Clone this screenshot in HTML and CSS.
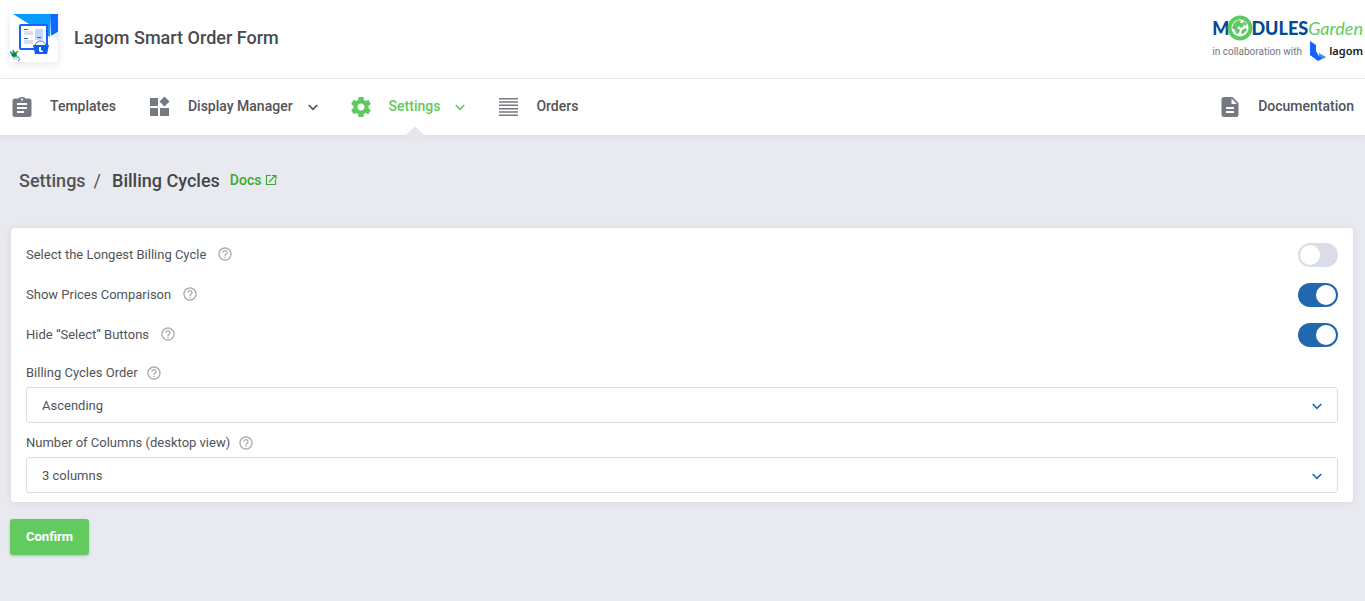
FILE: index.html
```html
<!DOCTYPE html>
<html lang="en">
<head>
    <meta charset="UTF-8">
    <meta name="viewport" content="width=device-width, initial-scale=1.0">
    <title>Lagom Smart Order Form - Billing Cycles</title>
    <link rel="stylesheet" href="styles.css">
</head>
<body>
    <svg class="sprite" aria-hidden="true">
        <symbol id="chevron" viewBox="0 0 12 12">
            <path d="M1.700 4l4.300 4.300L10.300 4" fill="none" stroke="currentColor" stroke-width="1.700"/>
        </symbol>
        <symbol id="help" viewBox="0 0 24 24">
            <path fill="currentColor" d="M11 18h2v-2h-2v2zm1-16C6.480 2 2 6.480 2 12s4.480 10 10 10 10-4.480 10-10S17.520 2 12 2zm0 18c-4.410 0-8-3.590-8-8s3.590-8 8-8 8 3.590 8 8-3.590 8-8 8zm0-14c-2.210 0-4 1.790-4 4h2c0-1.100.9-2 2-2s2 .9 2 2c0 2-3 1.750-3 5h2c0-2.250 3-2.500 3-5 0-2.210-1.790-4-4-4z"/>
        </symbol>
    </svg>

    <header class="header">
        <div class="brand">
            <svg class="brand-logo" viewBox="0 0 48 48" aria-hidden="true">
                <rect width="48" height="48" fill="#fff"/>
                <path d="M3 0h37v23z" fill="#0a9bff"/>
                <path d="M40 0h8v18l-7 4z" fill="#0b6cff"/>
                <path d="M48 18l-7 4 7 5z" fill="#eef0f3"/>
                <rect x="10" y="11" width="27" height="24" rx="1" fill="#fff" stroke="#1463ff" stroke-width="2"/>
                <path d="M14 15.500h4M14 24.500h4" stroke="#1463ff"/>
                <path d="M14 17h9v4h-9zM14 26h9v4h-9z" fill="#dcdee4"/>
                <rect x="25" y="15" width="8" height="11" fill="#c3d8ff"/>
                <path d="M27 23.500h4" stroke="#1463ff"/>
                <path d="M25 33c0-8 11-8 11 0" fill="#fff" stroke="#1463ff"/>
                <path d="M23 31h16l-2 9H25z" fill="#0b5ff5"/>
                <path d="M29 33h2v3l2 1v1h-3l-1-1z" fill="#fff"/>
                <path d="M2 42h5v4H3z" fill="#d9dbe0"/>
                <path d="M1 38l2 2 0-4 2 3 3-2-2 3 1 2-3 1-2-1z" fill="#16794b" stroke="#25a65b"/>
                <path d="M7 43c3 0 3 3 1 4.500M0 37l1 2" fill="none" stroke="#1463ff"/>
            </svg>
            <h1 class="brand-name">Lagom Smart Order Form</h1>
        </div>
        <div class="partners">
            <div class="mg-logo">
                <span class="mg-bold">M</span>
                <svg class="mg-globe" viewBox="0 0 26 26" role="img" aria-label="O">
                    <circle cx="13" cy="13" r="10.500" fill="#fff" stroke="#5fca5f" stroke-width="4"/>
                    <path d="M7 8l4-3 3 1-1 2 3 0 1 3-3 2-2-2-2 2 3 2-1 3-3 1-1-4-3-2zM17 6l3 3-2 2-2-3zM15 15l4-2 1 2-4 4-2-1z" fill="#5fca5f"/>
                </svg>
                <span class="mg-bold">DULES</span>
                <span class="mg-light">Garden</span>
            </div>
            <div class="collab">
                <span class="collab-text">in collaboration with</span>
                <svg class="lagom-mark" viewBox="0 0 16 20" aria-hidden="true">
                    <path d="M0 0l6 4v13l-6-3z" fill="#1463ff"/>
                    <path d="M0 14l6-4 3 5 7 1-8 4z" fill="#1463ff"/>
                    <path d="M9 12l7 4-4 1-3-2z" fill="#4f8bff"/>
                </svg>
                <strong class="lagom-name">lagom</strong>
            </div>
        </div>
    </header>

    <nav class="nav">
        <a class="nav-item" href="#">
            <svg class="nav-icon" viewBox="0 0 24 24"><path fill="currentColor" d="M19 3.500h-3.600C15 2.500 13.600 2 12 2s-3 .5-3.400 1.500H5c-1.600 0-2.500 1-2.500 2.300v13.900c0 1.300 1 2.300 2.500 2.300h14c1.600 0 2.500-1 2.500-2.300V5.800c0-1.300-1-2.300-2.500-2.300zM12 3.400c.6 0 1 .5 1 1s-.4 1.100-1 1.100-1-.5-1-1.100.4-1 1-1zM14 18H7v-2h7zm3-4H7v-2h10zm0-4H7V8h10z"/></svg>
            <span class="nav-label">Templates</span>
        </a>
        <a class="nav-item" href="#">
            <svg class="nav-icon" viewBox="0 0 24 24"><path fill="currentColor" d="M2 3h8v8H2zM2 13h8v8H2zM12 13h9v8h-9zM16.500 1.500l5 5-5 5-5-5z"/></svg>
            <span class="nav-label">Display Manager</span>
            <svg class="chevron"><use href="#chevron"/></svg>
        </a>
        <a class="nav-item active" href="#" aria-current="page">
            <svg class="nav-icon" viewBox="0 0 24 24"><path fill="currentColor" d="M19.430 12.980c.04-.32.07-.64.07-.98s-.03-.66-.07-.98l2.110-1.650c.19-.15.24-.42.12-.64l-2-3.460c-.12-.22-.39-.3-.61-.22l-2.490 1c-.52-.4-1.080-.73-1.690-.98l-.38-2.650C14.460 2.180 14.250 2 14 2h-4c-.25 0-.46.18-.49.42l-.38 2.650c-.61.25-1.170.59-1.690.98l-2.490-1c-.23-.09-.49 0-.61.22l-2 3.460c-.13.22-.07.49.12.64l2.110 1.650c-.04.32-.07.65-.07.98s.03.66.07.98l-2.110 1.650c-.19.15-.24.42-.12.64l2 3.460c.12.22.39.3.61.22l2.490-1c.52.4 1.080.73 1.690.98l.38 2.650c.03.24.24.42.49.42h4c.25 0 .46-.18.49-.42l.38-2.650c.61-.25 1.170-.59 1.690-.98l2.490 1c.23.09.49 0 .61-.22l2-3.460c.12-.22.07-.49-.12-.64l-2.110-1.650zM12 15.500c-1.930 0-3.500-1.570-3.500-3.500s1.570-3.500 3.500-3.500 3.500 1.570 3.500 3.500-1.570 3.500-3.500 3.500z"/></svg>
            <span class="nav-label">Settings</span>
            <svg class="chevron"><use href="#chevron"/></svg>
        </a>
        <a class="nav-item" href="#">
            <svg class="nav-icon" viewBox="0 0 24 24"><path fill="none" stroke="currentColor" stroke-width="1.500" d="M3 3.700h19M3 7h19M3 10.300h19M3 13.700h19M3 17h19M3 20.300h19"/></svg>
            <span class="nav-label">Orders</span>
        </a>
        <a class="nav-item nav-docs" href="#">
            <svg class="nav-icon" viewBox="0 0 24 24"><path fill="currentColor" d="M14.500 2H6C4.500 2 3.500 3 3.500 4.200v15.600C3.500 21 4.500 22 6 22h12.500c1.200 0 2-1 2-2.200V8zM16 18H8v-2h8zm0-4H8v-2h8zM13.500 9V3.500L19 9z"/></svg>
            <span class="nav-label">Documentation</span>
        </a>
    </nav>

    <main class="content">
        <div class="breadcrumb">
            <a class="crumb" href="#">Settings</a>
            <span class="crumb-sep">/</span>
            <h2 class="crumb-current">Billing Cycles</h2>
            <a class="docs-link" href="#">
                Docs
                <svg class="docs-icon" viewBox="0 0 12 12" fill="none" stroke="currentColor" aria-hidden="true">
                    <path d="M6 1.500H1.500v9h9V6M7 1.500h4v4M10.500 1.500L4 8" stroke-width="1.200"/>
                </svg>
            </a>
        </div>

        <form>
            <div class="panel">
                <div class="switch-row">
                    <label for="longest">Select the Longest Billing Cycle</label>
                    <svg class="help"><use href="#help"/></svg>
                    <input class="switch" type="checkbox" id="longest">
                </div>
                <div class="switch-row">
                    <label for="comparison">Show Prices Comparison</label>
                    <svg class="help"><use href="#help"/></svg>
                    <input class="switch" type="checkbox" id="comparison" checked>
                </div>
                <div class="switch-row">
                    <label for="hide-select">Hide “Select” Buttons</label>
                    <svg class="help"><use href="#help"/></svg>
                    <input class="switch" type="checkbox" id="hide-select" checked>
                </div>

                <div class="field">
                    <div class="field-head">
                        <label for="order">Billing Cycles Order</label>
                        <svg class="help"><use href="#help"/></svg>
                    </div>
                    <div class="select-wrap">
                        <select id="order">
                            <option>Ascending</option>
                            <option>Descending</option>
                        </select>
                        <svg class="select-arrow"><use href="#chevron"/></svg>
                    </div>
                </div>
                <div class="field">
                    <div class="field-head">
                        <label for="columns">Number of Columns (desktop view)</label>
                        <svg class="help"><use href="#help"/></svg>
                    </div>
                    <div class="select-wrap">
                        <select id="columns">
                            <option>3 columns</option>
                            <option>4 columns</option>
                        </select>
                        <svg class="select-arrow"><use href="#chevron"/></svg>
                    </div>
                </div>
            </div>
            <button class="confirm" type="submit">Confirm</button>
        </form>
    </main>
</body>
</html>
```
FILE: styles.css
```css
* {
    box-sizing: border-box;
}
body {
    margin: 0;
    background-color: #e9eaef;
    color: #505459;
    font-family: Roboto, "Liberation Sans", sans-serif;
    font-size: 13px;
    line-height: 20px;
}
a {
    color: inherit;
    text-decoration: none;
}
.sprite {
    display: none;
}

/* Header */
.header {
    display: flex;
    justify-content: space-between;
    align-items: center;
    min-height: 79px;
    padding: 0 2px 2px 10px;
    background-color: #fff;
    border-bottom: 1px solid #f0f0f2;
}
.brand {
    display: flex;
    align-items: center;
    gap: 16px;
}
.brand-logo {
    width: 48px;
    height: 48px;
    box-shadow: 0 2px 8px rgba(0, 0, 0, 0.1);
}
.brand-name {
    margin: 0;
    color: #484b50;
    font-size: 18px;
    font-weight: 500;
    line-height: 24px;
}
.mg-logo {
    display: flex;
    align-items: center;
    height: 26px;
    line-height: 26px;
}
.mg-bold {
    color: #034a94;
    font-family: Lato, sans-serif;
    font-size: 18px;
    font-weight: 900;
}
.mg-globe {
    width: 26px;
    height: 26px;
    margin: 0 -2px;
}
.mg-light {
    color: #5fca5f;
    font-family: Lato, sans-serif;
    font-size: 18px;
    font-style: italic;
    font-weight: 400;
}
.collab {
    display: flex;
    align-items: center;
    height: 20px;
    color: #73777f;
    font-size: 10px;
}
.collab-text {
    padding-top: 2px;
}
.lagom-mark {
    width: 16px;
    height: 20px;
    margin: 0 3px 0 auto;
}
.lagom-name {
    color: #15181f;
    font-family: "Noto Sans", sans-serif;
    font-size: 11px;
    font-weight: 600;
}

/* Navigation */
.nav {
    display: flex;
    gap: 32px;
    padding: 0 11px 0 10px;
    background-color: #fff;
    box-shadow: 0 1px 6px rgba(80, 84, 110, 0.12);
}
.nav-item {
    display: flex;
    align-items: center;
    height: 56px;
    font-size: 14px;
    font-weight: 500;
}
.nav-icon {
    width: 24px;
    height: 24px;
    margin-right: 16px;
    color: #757982;
}
.nav-label {
    position: relative;
    padding-bottom: 2px;
}
.chevron {
    width: 12px;
    height: 12px;
    margin: 0 -2px 0 14px;
}
.nav-item.active,
.active .nav-icon {
    color: #5fca5f;
}
.active .nav-label::after {
    content: "";
    position: absolute;
    top: 33px;
    left: 50%;
    width: 16px;
    height: 16px;
    margin-left: -8px;
    border-radius: 2px;
    background-color: #e6e7ec;
    transform: rotate(45deg);
    clip-path: polygon(0 0, 100% 0, 0 100%);
}
.nav-docs {
    margin-left: auto;
}

/* Page */
.content {
    padding: 32px 12px 46px 11px;
}
.breadcrumb {
    display: flex;
    align-items: center;
    height: 28px;
    margin-bottom: 33px;
    padding-left: 8px;
    font-size: 18px;
}
.crumb {
    font-weight: 500;
}
.crumb-sep {
    margin: 0 11px 0 8px;
}
.crumb-current {
    margin: 0;
    color: #43464b;
    font-size: 18px;
    font-weight: 500;
}
.docs-link {
    display: flex;
    align-items: center;
    gap: 4px;
    margin-left: 10px;
    padding-bottom: 2px;
    color: #3aa935;
    font-size: 14px;
    font-weight: 500;
}
.docs-icon {
    width: 12px;
    height: 12px;
}

.panel {
    padding: 7px 15px 9px;
    border-radius: 4px;
    background-color: #fff;
    box-shadow: 0 1px 6px rgba(80, 84, 110, 0.12);
}
.switch-row {
    display: flex;
    align-items: center;
    height: 40px;
}
.help {
    width: 16px;
    height: 16px;
    margin: 0 0 2px 11px;
    color: #a9abb0;
}
.switch {
    appearance: none;
    width: 40px;
    height: 24px;
    margin: 0 0 0 auto;
    padding: 2px;
    border-radius: 12px;
    background-color: #dadde7;
    cursor: pointer;
}
.switch::before {
    content: "";
    display: block;
    width: 20px;
    height: 20px;
    border-radius: 50%;
    background-color: #fff;
}
.switch:checked {
    background-color: #2268ae;
}
.switch:checked::before {
    margin-left: auto;
}

.field {
    padding-top: 8px;
}
.field-head {
    display: flex;
    align-items: center;
    height: 20px;
    margin-bottom: 4px;
}
.field-head .help {
    margin: 0 0 0 8px;
}
.field + .field {
    padding-top: 10px;
}
.select-wrap {
    position: relative;
}
select {
    appearance: none;
    display: block;
    width: 100%;
    height: 36px;
    padding: 2px 36px 0 15px;
    border: 1px solid #dadce8;
    border-radius: 3px;
    background-color: #fff;
    color: inherit;
    font: inherit;
}
.select-arrow {
    position: absolute;
    top: 13px;
    right: 15px;
    width: 12px;
    height: 12px;
    color: #2268ae;
    pointer-events: none;
}

.confirm {
    display: block;
    height: 36px;
    margin: 17px 0 0 -1px;
    padding: 0 16px;
    border: none;
    border-radius: 3px;
    background-color: #62cb5f;
    box-shadow: 0 1px 3px rgba(0, 0, 0, 0.2);
    color: #fff;
    font: inherit;
    font-weight: 700;
    cursor: pointer;
}
```
